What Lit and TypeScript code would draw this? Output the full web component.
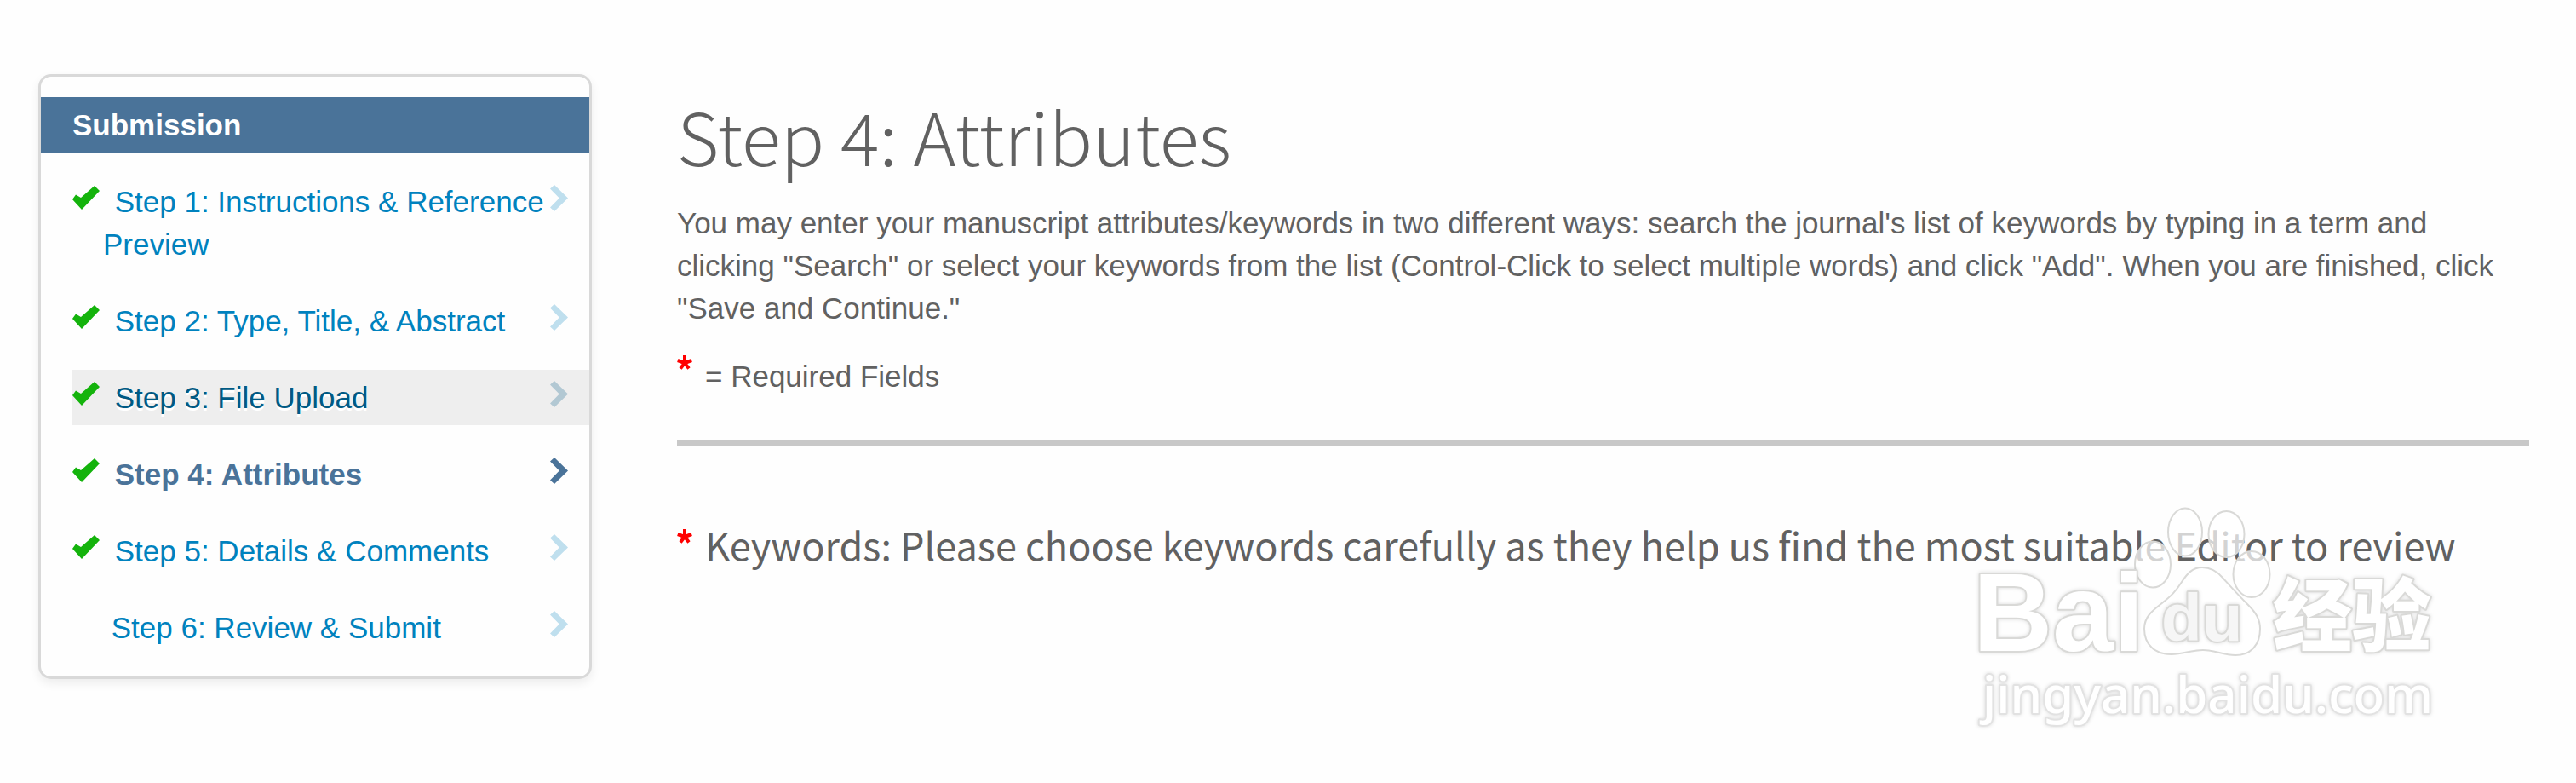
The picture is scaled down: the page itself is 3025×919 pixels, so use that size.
import { LitElement, html, css } from "lit";
import { customElement } from "lit/decorators.js";
import { classMap } from "lit/directives/class-map.js";

interface Step {
  label: string;
  done: boolean;
  state?: "hover" | "current";
}

const steps: Step[] = [
  { label: "Step 1: Instructions & Reference Preview", done: true },
  { label: "Step 2: Type, Title, & Abstract", done: true },
  { label: "Step 3: File Upload", done: true, state: "hover" },
  { label: "Step 4: Attributes", done: true, state: "current" },
  { label: "Step 5: Details & Comments", done: true },
  { label: "Step 6: Review & Submit", done: false },
];

@customElement("step-nav")
export class StepNav extends LitElement {
  static styles = css`
    :host { display: block; }
    .card {
      border: 3px solid #d9d9d9;
      border-radius: 15px;
      padding: 24px 0 25px;
      background: #fefefe;
      box-shadow: 0 5px 12px rgba(0, 0, 0, 0.07);
    }
    .title {
      margin: 0;
      padding: 8px 37px 7px;
      background: #4a7399;
      color: #fff;
      font-size: 35px;
      line-height: 50px;
      font-weight: 700;
    }
    .steps {
      list-style: none;
      margin: 0;
      padding: 25px 0 0 37px;
      display: grid;
      gap: 25px;
    }
    .link {
      display: flex;
      align-items: flex-start;
      justify-content: space-between;
      padding: 8px 25px 7px 36px;
      color: #0082be;
      text-decoration: none;
    }
    .label { display: block; }
    .done .label { text-indent: -36px; }
    .tick { width: 32px; height: 28px; margin-right: 8px; vertical-align: 3px; }
    .chevron { flex: none; width: 21px; height: 31px; margin-top: 5px; color: #bfdfee; }
    .hover .link { background: #eee; color: #005a84; text-shadow: 0 3px 0 #fff; }
    .hover .chevron { color: #b2c8d3; }
    .current .link { color: #4a7399; font-weight: 700; }
    .current .chevron { color: #4a7399; }
  `;

  render() {
    return html`
      <nav class="card">
        <h2 class="title">Submission</h2>
        <ol class="steps">
          ${steps.map((s) => html`
            <li class=${classMap({ done: s.done, hover: s.state === "hover", current: s.state === "current" })}>
              <a class="link" href="#">
                <span class="label">${s.done ? html`<svg class="tick" viewBox="0 0 32 28" aria-hidden="true"><path d="M0 16 L4 10.500 L10 14 L26 0 L32 6 L11 28 Z" fill="#14b30c"/></svg>` : ""}&nbsp;${s.label}</span>
                <svg class="chevron" viewBox="0 0 21 31" aria-hidden="true"><path d="M5 0 L21 15.500 L5 31 L0 26.500 L10.800 15.500 L0 4.500 Z" fill="currentColor"/></svg>
              </a>
            </li>`)}
        </ol>
      </nav>`;
  }
}

@customElement("site-watermark")
export class SiteWatermark extends LitElement {
  static styles = css`
    :host { display: block; pointer-events: none; }
    .mark { display: block; width: 570px; height: 270px; }
    .shape { fill: #fff; fill-opacity: 0.72; stroke: #d9d9d7; stroke-width: 2px; }
    .text { fill: #fff; stroke: #d9d9d7; stroke-width: 4px; paint-order: stroke; stroke-linejoin: round; filter: drop-shadow(0 0 2px rgba(0, 0, 0, 0.14)); }
    .latin { font: 700 129px "Liberation Sans", Arial, sans-serif; }
    .inner { font: 700 78px "Liberation Sans", Arial, sans-serif; fill: #f6f6f6; }
    .cjk { font: 900 93px "Noto Sans CJK SC", sans-serif; }
    .url { font: 500 60px "Noto Sans", sans-serif; stroke: #e2e2e2; }
  `;

  render() {
    return html`
      <svg class="mark" viewBox="0 0 570 270">
        <ellipse class="shape" cx="218" cy="72.500" rx="21" ry="27" />
        <ellipse class="shape" cx="256" cy="34.500" rx="20" ry="28" />
        <ellipse class="shape" cx="304.500" cy="37" rx="21" ry="27" />
        <ellipse class="shape" cx="334" cy="84" rx="21.500" ry="27" />
        <path class="shape" d="M276 76 C264 76 258 84 252 93 C245 104 240 109 230 117 C217 127 208 134 208 148 C208 166 220 178 240 178 C254 178 262 173 277 173 C292 173 300 179 315 179 C334 179 344 166 344 148 C344 136 338 128 330 120 C318 108 310 99 300 88 C293 80 286 76 276 76 Z" />
        <text class="text latin" x="7" y="174">Bai</text>
        <text class="text inner" x="228" y="162">du</text>
        <text class="text cjk" x="359" y="167">经验</text>
        <text class="text url" x="18" y="247">jingyan.baidu.com</text>
      </svg>`;
  }
}

@customElement("app-root")
export class AppRoot extends LitElement {
  static styles = css`
    :host {
      display: block;
      position: relative;
      min-height: 100vh;
      background: #fefefe;
      color: #616161;
      font: 35px/50px Arial, "Liberation Sans", sans-serif;
    }
    .page {
      display: grid;
      grid-template-columns: 650px 1fr;
      column-gap: 100px;
      align-items: start;
      padding: 87px 55px 0 45px;
    }
    .heading {
      margin: 0;
      padding-top: 21px;
      font: 300 85px/100px "Noto Sans CJK SC", sans-serif;
    }
    .intro { margin: 29px 0 0; }
    .required { margin: 30px 0 0; display: flex; gap: 15px; }
    .star { width: 18px; height: 17px; color: #f00; flex: none; }
    .rule { margin: 50px 0 0; border: 0; height: 7px; background: #c8c8c8; }
    .keywords {
      margin: 77px 0 0;
      display: flex;
      gap: 15px;
      font: 400 45px/75px "Noto Sans CJK SC", sans-serif;
    }
    .keywords .star { margin-top: 20px; }
    .watermark { position: absolute; right: 145px; top: 590px; }
  `;

  private star = () => html`<svg class="star" viewBox="0 0 18 17" role="img" aria-label="required"><path d="M9 9 V0 M9 9 L0.800 6 M9 9 L17.200 6 M9 9 L4 15.500 M9 9 L14 15.500" stroke="currentColor" stroke-width="4"/></svg>`;

  render() {
    return html`
      <div class="page">
        <step-nav></step-nav>
        <main>
          <h1 class="heading">Step 4: Attributes</h1>
          <p class="intro">You may enter your manuscript attributes/keywords in two different ways: search the journal's list of keywords by typing in a term and clicking "Search" or select your keywords from the list (Control-Click to select multiple words) and click "Add". When you are finished, click "Save and Continue."</p>
          <p class="required">${this.star()}<span>= Required Fields</span></p>
          <hr class="rule" />
          <h2 class="keywords">${this.star()}<span>Keywords: Please choose keywords carefully as they help us find the most suitable Editor to review</span></h2>
        </main>
      </div>
      <site-watermark class="watermark"></site-watermark>`;
  }
}
